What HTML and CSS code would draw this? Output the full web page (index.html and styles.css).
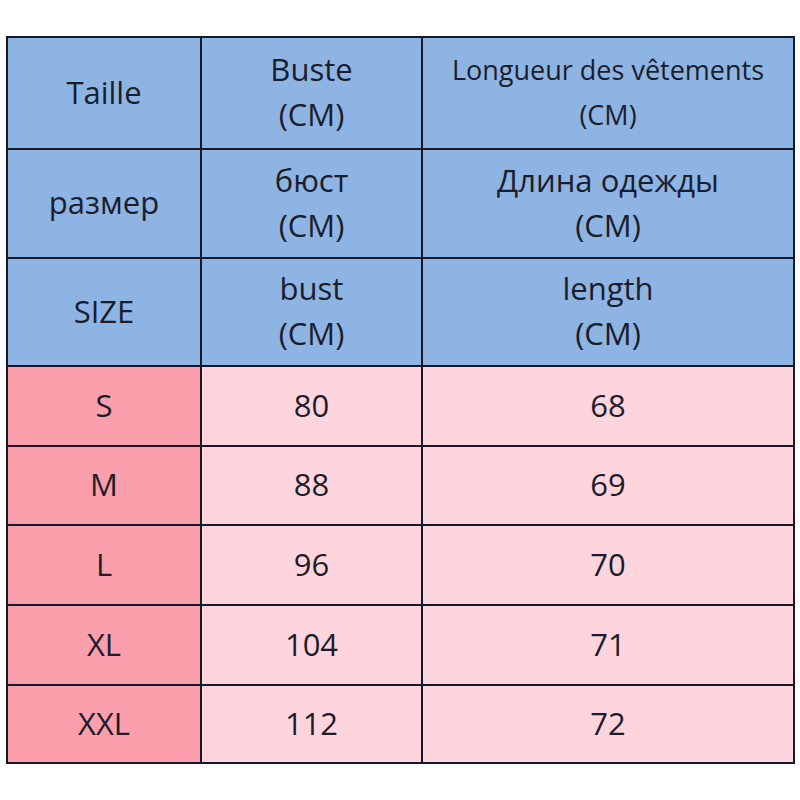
FILE: index.html
```html
<!DOCTYPE html>
<html>
<head>
<meta charset="utf-8">
<link rel="stylesheet" href="styles.css">
</head>
<body>
<div class="page">
  <div class="grid">
    <div class="cell head">Taille</div>
    <div class="cell head two"><span>Buste</span><span>(CM)</span></div>
    <div class="cell head two small"><span>Longueur des vêtements</span><span>(CM)</span></div>

    <div class="cell head">размер</div>
    <div class="cell head two"><span>бюст</span><span>(CM)</span></div>
    <div class="cell head two"><span>Длина одежды</span><span>(CM)</span></div>

    <div class="cell head">SIZE</div>
    <div class="cell head two"><span>bust</span><span>(CM)</span></div>
    <div class="cell head two"><span>length</span><span>(CM)</span></div>

    <div class="cell size">S</div><div class="cell data">80</div><div class="cell data">68</div>
    <div class="cell size">M</div><div class="cell data">88</div><div class="cell data">69</div>
    <div class="cell size">L</div><div class="cell data">96</div><div class="cell data">70</div>
    <div class="cell size">XL</div><div class="cell data">104</div><div class="cell data">71</div>
    <div class="cell size">XXL</div><div class="cell data">112</div><div class="cell data">72</div>
  </div>
</div>
</body>
</html>
```
FILE: styles.css
```css
html, body {
  margin: 0;
  padding: 0;
  background: #ffffff;
}
.page {
  width: 800px;
  height: 800px;
  padding: 36px 0 0 6px;
  box-sizing: border-box;
}
.grid {
  display: grid;
  grid-template-columns: 192px 219px 370px;
  grid-template-rows: 110px 107px 106px 78px 77px 78px 78px 76px;
  gap: 2px;
  padding: 2px;
  background: #15192a;
  width: max-content;
  font-family: "Open Sans", "Noto Sans", sans-serif;
  color: #1b1d2b;
}
.cell {
  display: flex;
  flex-direction: column;
  align-items: center;
  justify-content: center;
  font-size: 31px;
  line-height: 45px;
  text-align: center;
  padding-bottom: 2px;
}
.head {
  background: #8eb4e3;
}
.small {
  font-size: 27px;
}
.size {
  background: #fb9fac;
}
.data {
  background: #fed5dd;
}
```
